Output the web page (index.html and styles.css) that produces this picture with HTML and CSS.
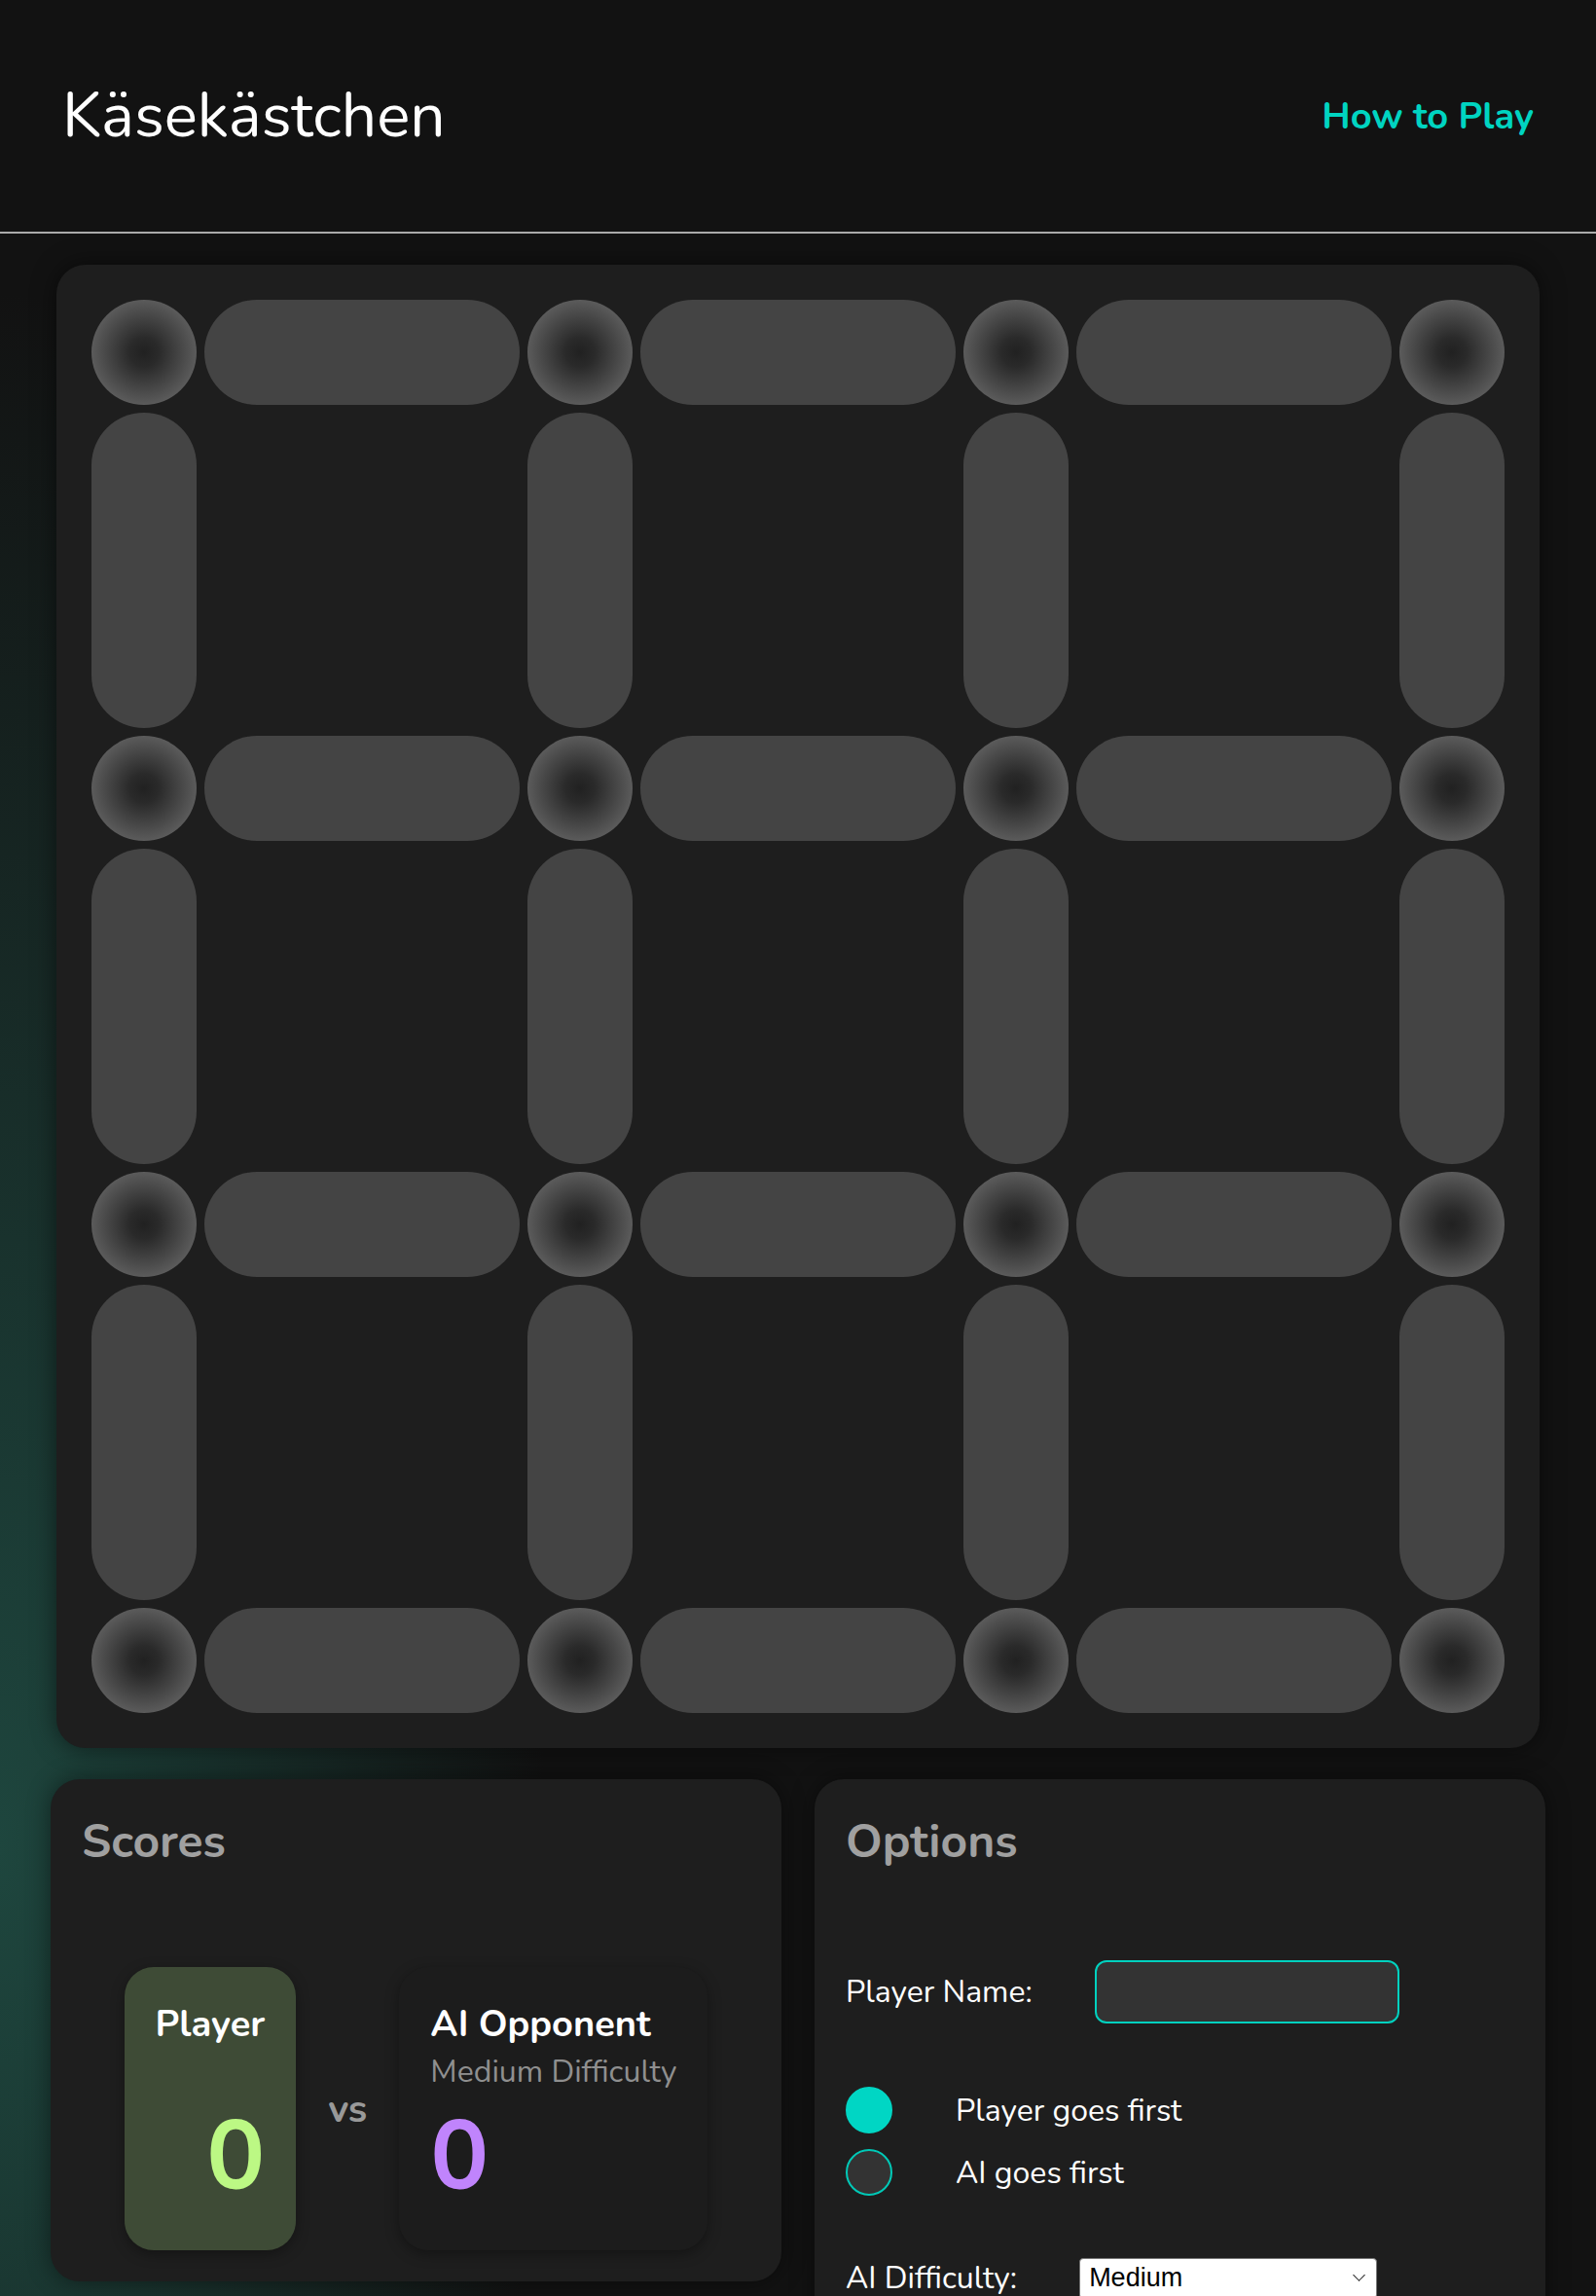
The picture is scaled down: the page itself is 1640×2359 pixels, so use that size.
FILE: index.html
```html
<!DOCTYPE html>
<html lang="de">
<head>
<meta charset="utf-8">
<title>Käsekästchen</title>
<link rel="stylesheet" href="styles.css">
</head>
<body>
<header class="site-header">
  <h1 class="site-title">Käsekästchen</h1>
  <a class="help-link" href="#">How to Play</a>
</header>
<main class="page">
  <section class="board">
    <div class="grid">
      <span class="dot"></span><span class="edge"></span><span class="dot"></span><span class="edge"></span><span class="dot"></span><span class="edge"></span><span class="dot"></span>
      <span class="edge"></span><span class="cell"></span><span class="edge"></span><span class="cell"></span><span class="edge"></span><span class="cell"></span><span class="edge"></span>
      <span class="dot"></span><span class="edge"></span><span class="dot"></span><span class="edge"></span><span class="dot"></span><span class="edge"></span><span class="dot"></span>
      <span class="edge"></span><span class="cell"></span><span class="edge"></span><span class="cell"></span><span class="edge"></span><span class="cell"></span><span class="edge"></span>
      <span class="dot"></span><span class="edge"></span><span class="dot"></span><span class="edge"></span><span class="dot"></span><span class="edge"></span><span class="dot"></span>
      <span class="edge"></span><span class="cell"></span><span class="edge"></span><span class="cell"></span><span class="edge"></span><span class="cell"></span><span class="edge"></span>
      <span class="dot"></span><span class="edge"></span><span class="dot"></span><span class="edge"></span><span class="dot"></span><span class="edge"></span><span class="dot"></span>
    </div>
  </section>

  <section class="panels">
    <div class="card scores">
      <h2 class="card-title">Scores</h2>
      <div class="score-row">
        <div class="score-box player">
          <div class="score-name">Player</div>
          <div class="score-sub">&nbsp;</div>
          <div class="score-value">0</div>
        </div>
        <div class="vs">vs</div>
        <div class="score-box ai">
          <div class="score-name">AI Opponent</div>
          <div class="score-sub">Medium Difficulty</div>
          <div class="score-value">0</div>
        </div>
      </div>
    </div>

    <div class="card options">
      <h2 class="card-title">Options</h2>
      <div class="field field-name">
        <label class="field-label" for="player-name">Player Name:</label>
        <input class="text-input" id="player-name" type="text">
      </div>
      <div class="radios">
        <label class="radio"><input class="radio-input" type="radio" name="first" checked>Player goes first</label>
        <label class="radio"><input class="radio-input" type="radio" name="first">AI goes first</label>
      </div>
      <div class="field field-difficulty">
        <label class="field-label" for="difficulty">AI Difficulty:</label>
        <span class="select-wrap">
          <select class="select" id="difficulty">
            <option>Easy</option>
            <option selected>Medium</option>
            <option>Hard</option>
          </select>
        </span>
      </div>
    </div>
  </section>
</main>
</body>
</html>
```

FILE: styles.css
```css
html, body {
  margin: 0;
}

body {
  min-height: 2359px;
  background:
    radial-gradient(ellipse 560px 1600px at 0 1900px, rgba(30, 70, 62, 1) 0%, rgba(28, 64, 57, 0.8) 30%, rgba(18, 18, 18, 0) 100%),
    #121212;
  color: #fff;
  font-family: "Nunito", "Lato", "Noto Sans", sans-serif;
}

.site-header {
  height: 238px;
  display: flex;
  align-items: center;
  justify-content: space-between;
  padding: 0 64px;
  border-bottom: 2px solid #aaaaaa;
  background: #121212;
}

.site-title {
  margin: 0;
  font-size: 64px;
  font-weight: 400;
  line-height: 1.2;
  color: #fff;
}

.help-link {
  color: #00d4c1;
  font-size: 38px;
  font-weight: 700;
  text-decoration: none;
}

.page {
  padding-top: 32px;
}

.board {
  width: 1524px;
  box-sizing: border-box;
  margin: 0 auto;
  padding: 36px;
  background: #1e1e1e;
  border-radius: 30px;
  box-shadow: 0 0 24px rgba(0, 0, 0, 0.5);
}

.grid {
  display: grid;
  grid-template-columns: repeat(3, 108px 324px) 108px;
  grid-template-rows: repeat(3, 108px 324px) 108px;
  gap: 8px;
}

.dot {
  border-radius: 50%;
  background: radial-gradient(circle closest-side, #212121 0%, #2a2a2a 28%, #5b5b5b 100%);
}

.edge {
  background: #444444;
  border-radius: 54px;
}

.panels {
  width: 1536px;
  margin: 32px auto 0;
  display: grid;
  grid-template-columns: 1fr 1fr;
  gap: 34px;
  align-items: start;
}

.card {
  background: #1e1e1e;
  border-radius: 30px;
  padding: 32px;
  box-shadow: 0 0 24px rgba(0, 0, 0, 0.45);
}

.card-title {
  margin: 0;
  font-size: 48px;
  font-weight: 700;
  line-height: 65px;
  color: #a0a0a0;
}

.score-row {
  margin-top: 96px;
  display: flex;
  justify-content: center;
  align-items: center;
  gap: 33px;
}

.score-box {
  border-radius: 30px;
  padding: 32px 32px 37px;
  display: flex;
  flex-direction: column;
  box-shadow: 0 4px 14px rgba(0, 0, 0, 0.35);
}

.score-box.player {
  background: #3e4b36;
}

.score-box.ai {
  background: #1c1c1c;
}

.score-name {
  font-size: 38px;
  font-weight: 700;
  line-height: 54px;
  color: #fff;
}

.score-sub {
  font-size: 32px;
  line-height: 43px;
  color: #8f8f8f;
}

.score-value {
  margin-top: 5px;
  font-size: 100px;
  font-weight: 700;
  line-height: 120px;
}

.player .score-value {
  text-align: right;
  color: #bcf884;
}

.ai .score-value {
  color: #c084fc;
}

.vs {
  font-size: 40px;
  font-weight: 700;
  color: #999999;
}

.field {
  display: flex;
  align-items: center;
  gap: 64px;
}

.field-name {
  margin-top: 89px;
}

.field-label {
  font-size: 32px;
  color: #fff;
}

.text-input {
  width: 313px;
  height: 65px;
  box-sizing: border-box;
  border: 2px solid #00d1bf;
  border-radius: 12px;
  background: #333333;
  color: #fff;
  font: inherit;
  font-size: 28px;
  padding: 0 16px;
  outline: none;
}

.radios {
  margin-top: 65px;
  display: flex;
  flex-direction: column;
  gap: 16px;
}

.radio {
  display: flex;
  align-items: center;
  gap: 65px;
  font-size: 32px;
  color: #fff;
}

.radio-input {
  appearance: none;
  -webkit-appearance: none;
  margin: 0;
  width: 48px;
  height: 48px;
  border-radius: 50%;
  box-sizing: border-box;
  background: #333333;
  border: 2px solid #00c9b7;
}

.radio-input:checked {
  background: #00d6c4;
  border-color: #00d6c4;
}

.field-difficulty {
  margin-top: 63px;
}

.select-wrap {
  position: relative;
  display: inline-block;
}

.select-wrap::after {
  content: "";
  position: absolute;
  right: 14px;
  top: 13px;
  width: 8px;
  height: 8px;
  border-right: 1.5px solid #222;
  border-bottom: 1.5px solid #222;
  transform: rotate(45deg);
  pointer-events: none;
}

.select {
  appearance: none;
  -webkit-appearance: none;
  width: 306px;
  height: 42px;
  box-sizing: border-box;
  padding: 2px 36px 2px 9px;
  border: 1px solid #767676;
  border-radius: 4px;
  background: #ffffff;
  font-family: "Liberation Sans", Arial, sans-serif;
  font-size: 27px;
  line-height: 31px;
  color: #000;
}
```
